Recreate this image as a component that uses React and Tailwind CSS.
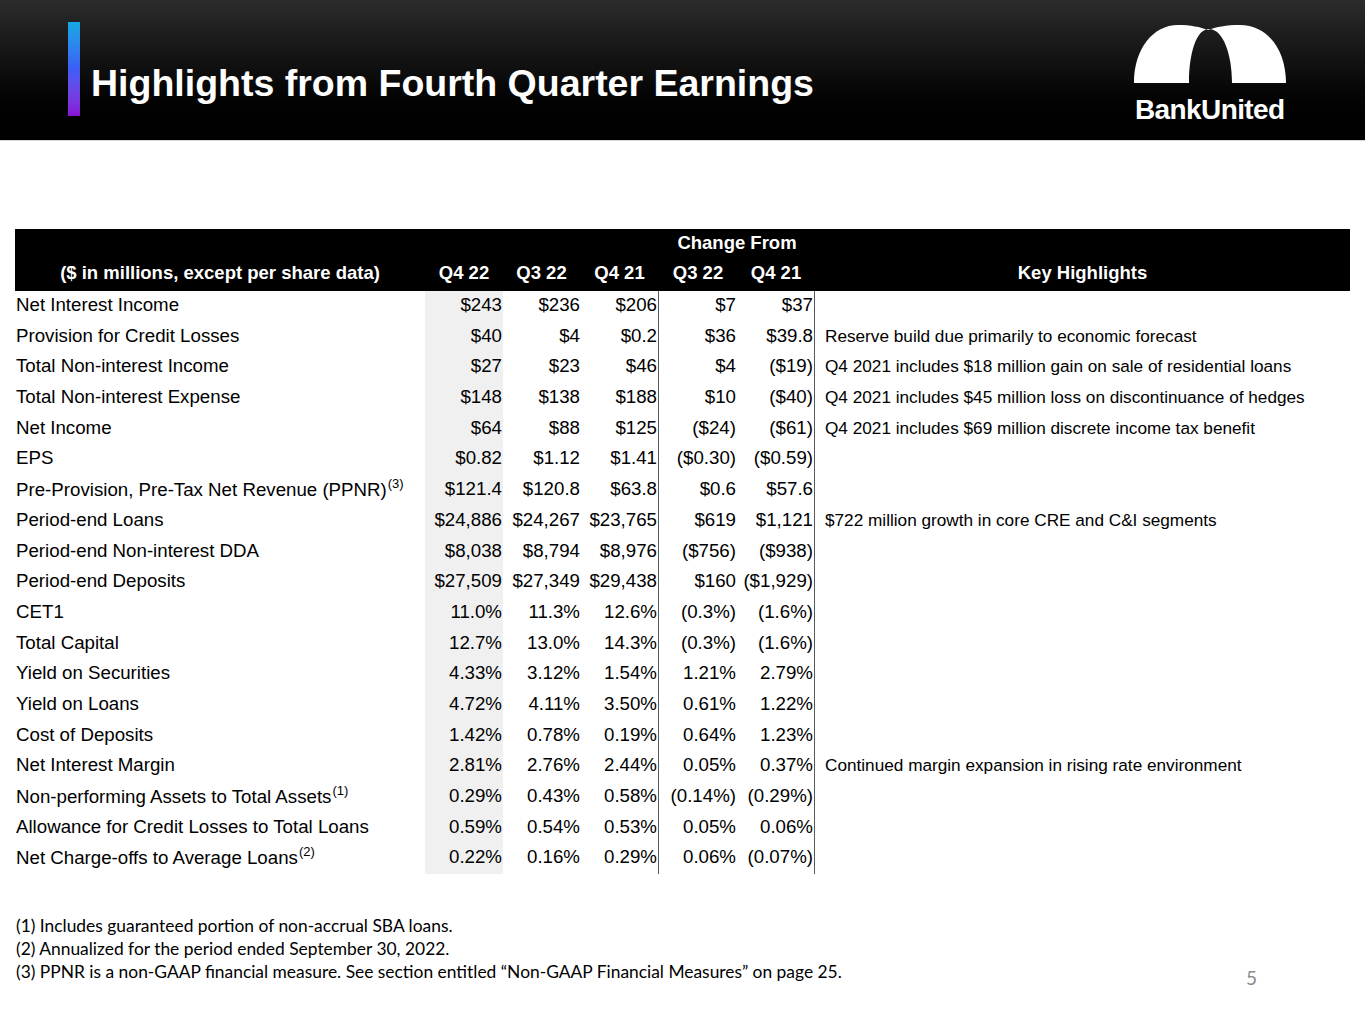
import React from "react";

const rows = [
  ["Net Interest Income", null, "$243", "$236", "$206", "$7", "$37", ""],
  ["Provision for Credit Losses", null, "$40", "$4", "$0.2", "$36", "$39.8", "Reserve build due primarily to economic forecast"],
  ["Total Non-interest Income", null, "$27", "$23", "$46", "$4", "($19)", "Q4 2021 includes $18 million gain on sale of residential loans"],
  ["Total Non-interest Expense", null, "$148", "$138", "$188", "$10", "($40)", "Q4 2021 includes $45 million loss on discontinuance of hedges"],
  ["Net Income", null, "$64", "$88", "$125", "($24)", "($61)", "Q4 2021 includes $69 million discrete income tax benefit"],
  ["EPS", null, "$0.82", "$1.12", "$1.41", "($0.30)", "($0.59)", ""],
  ["Pre-Provision, Pre-Tax Net Revenue (PPNR)", "(3)", "$121.4", "$120.8", "$63.8", "$0.6", "$57.6", ""],
  ["Period-end Loans", null, "$24,886", "$24,267", "$23,765", "$619", "$1,121", "$722 million growth in core CRE and C&I segments"],
  ["Period-end Non-interest DDA", null, "$8,038", "$8,794", "$8,976", "($756)", "($938)", ""],
  ["Period-end Deposits", null, "$27,509", "$27,349", "$29,438", "$160", "($1,929)", ""],
  ["CET1", null, "11.0%", "11.3%", "12.6%", "(0.3%)", "(1.6%)", ""],
  ["Total Capital", null, "12.7%", "13.0%", "14.3%", "(0.3%)", "(1.6%)", ""],
  ["Yield on Securities", null, "4.33%", "3.12%", "1.54%", "1.21%", "2.79%", ""],
  ["Yield on Loans", null, "4.72%", "4.11%", "3.50%", "0.61%", "1.22%", ""],
  ["Cost of Deposits", null, "1.42%", "0.78%", "0.19%", "0.64%", "1.23%", ""],
  ["Net Interest Margin", null, "2.81%", "2.76%", "2.44%", "0.05%", "0.37%", "Continued margin expansion in rising rate environment"],
  ["Non-performing Assets to Total Assets", "(1)", "0.29%", "0.43%", "0.58%", "(0.14%)", "(0.29%)", ""],
  ["Allowance for Credit Losses to Total Loans", null, "0.59%", "0.54%", "0.53%", "0.05%", "0.06%", ""],
  ["Net Charge-offs to Average Loans", "(2)", "0.22%", "0.16%", "0.29%", "0.06%", "(0.07%)", ""],
];

function Logo() {
  return (
    <div className="flex flex-col items-start">
      <svg width="152" height="60" viewBox="0 0 152 60" className="block">
        <path
          fillRule="evenodd"
          fill="#ffffff"
          d="M0,59 C0,25 19,1 44,1 C57,1 66,3 74,6 C82,3 92,1 106,1 C133,1 152,25 152,59 Z M55,59 C55,30 62,5 75,5 C89,5 98,30 98,59 Z"
        />
      </svg>
      <div
        className="text-white font-bold text-[28px] leading-none tracking-[-0.6px] mt-[12px] ml-[1px]"
        style={{ fontFamily: '"Liberation Sans", Arial, sans-serif' }}
      >
        BankUnited
      </div>
    </div>
  );
}

export default function App() {
  const sans = { fontFamily: '"Liberation Sans", Arial, sans-serif' };
  const cell = "h-[30.7px] text-[18.7px] leading-[22px] pt-[3px]";
  return (
    <div className="w-[1365px] h-[1024px] bg-white relative overflow-hidden" style={sans}>
      {/* Header */}
      <div className="h-[141px] bg-linear-to-b from-[#2c2c2c] via-[#0c0c0c] via-55% to-black flex items-start border-b border-[#d8d8d8]">
        <div className="ml-[68px] mt-[22px] w-[12px] h-[94px] bg-linear-to-b from-[#14a8e4] via-[#3b5df4] to-[#8a10d6]" />
        <div className="ml-[11px] mt-[60px] text-white font-bold text-[37.5px] leading-[46px]">
          Highlights from Fourth Quarter Earnings
        </div>
        <div className="ml-auto mr-[79px] mt-[24px]">
          <Logo />
        </div>
      </div>

      {/* Table */}
      <div className="ml-[15px] mt-[88px] w-[1335px]">
        <div className="grid grid-cols-[410px_78px_77px_79px_78px_78px_535px] bg-black text-white font-bold text-[18.5px] leading-[22px]">
          <div className="col-start-5 col-span-2 h-[31px] flex items-center justify-center pb-[4px]">Change From</div>
          <div className="col-start-1 h-[31px] flex items-center justify-center pb-[5px]">($ in millions, except per share data)</div>
          <div className="h-[31px] flex items-center justify-center pb-[5px]">Q4 22</div>
          <div className="h-[31px] flex items-center justify-center pb-[5px]">Q3 22</div>
          <div className="h-[31px] flex items-center justify-center pb-[5px]">Q4 21</div>
          <div className="h-[31px] flex items-center justify-center pb-[5px]">Q3 22</div>
          <div className="h-[31px] flex items-center justify-center pb-[5px]">Q4 21</div>
          <div className="h-[31px] flex items-center justify-center pb-[5px]">Key Highlights</div>
        </div>
        <div className="grid grid-cols-[410px_78px_77px_79px_78px_78px_535px] text-black">
          {rows.map((r, i) => (
            <React.Fragment key={i}>
              <div className={`${cell} pl-[1px] whitespace-nowrap`}>
                {r[0]}
                {r[1] && <sup className="text-[13px] ml-[1px] relative -top-[1px] align-super leading-none">{r[1]}</sup>}
              </div>
              <div className={`${cell} pr-[1px] text-right bg-[#f0f0f0]`}>{r[2]}</div>
              <div className={`${cell} text-right`}>{r[3]}</div>
              <div className={`${cell} pr-[1px] text-right border-r border-[#5a5a5a]`}>{r[4]}</div>
              <div className={`${cell} pr-[1px] text-right`}>{r[5]}</div>
              <div className={`${cell} pr-[1px] text-right border-r border-[#5a5a5a]`}>{r[6]}</div>
              <div className="h-[30.7px] text-[17.2px] leading-[22px] pt-[3px] pl-[10px] whitespace-nowrap">{r[7]}</div>
            </React.Fragment>
          ))}
        </div>
      </div>

      {/* Footnotes */}
      <div className="ml-[16px] mt-[40px] text-[17.4px] leading-[23px] text-black" style={{ fontFamily: 'Lato, "Open Sans", sans-serif' }}>
        <div>(1) Includes guaranteed portion of non-accrual SBA loans.</div>
        <div>(2) Annualized for the period ended September 30, 2022.</div>
        <div>(3) PPNR is a non-GAAP financial measure. See section entitled “Non-GAAP Financial Measures” on page 25.</div>
      </div>
      <div className="absolute left-[1246px] top-[964px] text-[19px] text-[#8a8a8a]" style={{ fontFamily: 'Lato, "Open Sans", sans-serif' }}>
        5
      </div>
    </div>
  );
}
